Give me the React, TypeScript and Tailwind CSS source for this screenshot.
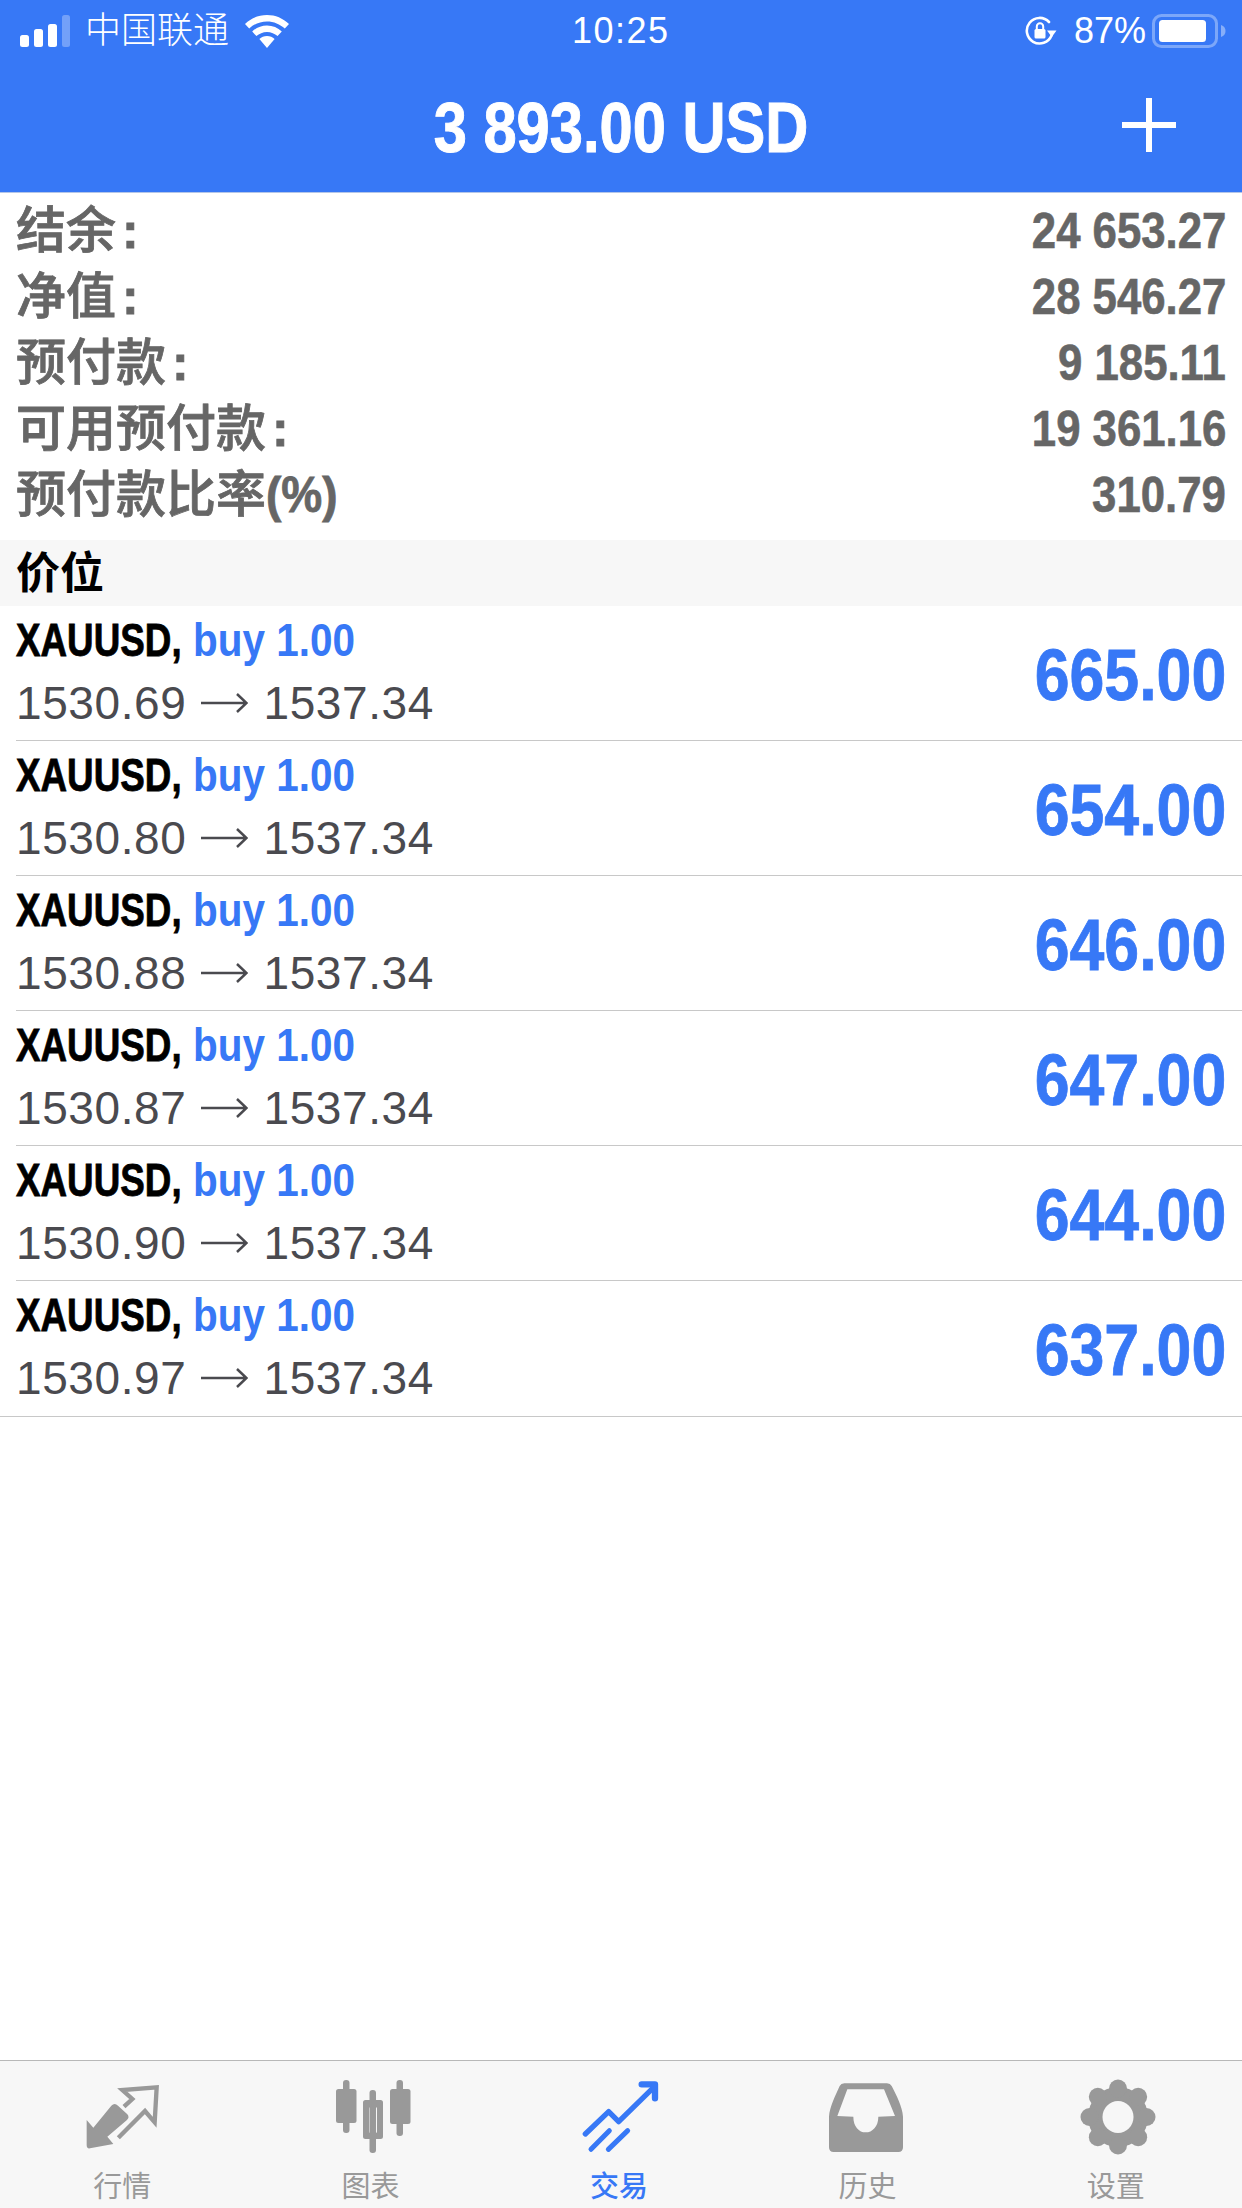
import React from 'react';

const summary = [
  { label: '结余', value: '24 653.27', colon: true },
  { label: '净值', value: '28 546.27', colon: true },
  { label: '预付款', value: '9 185.11', colon: true },
  { label: '可用预付款', value: '19 361.16', colon: true },
  { label: '预付款比率', value: '310.79', colon: false },
];

const positions = [
  { open: '1530.69', profit: '665.00' },
  { open: '1530.80', profit: '654.00' },
  { open: '1530.88', profit: '646.00' },
  { open: '1530.87', profit: '647.00' },
  { open: '1530.90', profit: '644.00' },
  { open: '1530.97', profit: '637.00' },
];

function Signal() {
  return (
    <svg width="50" height="32" viewBox="0 0 50 32" fill="#fff">
      <rect x="0" y="20" width="9" height="12" rx="2.5" />
      <rect x="14" y="14" width="9" height="18" rx="2.5" />
      <rect x="28" y="9" width="9" height="23" rx="2.5" />
      <rect x="42" y="0" width="8" height="32" rx="2.5" opacity="0.3" />
    </svg>
  );
}

function Wifi() {
  return (
    <svg width="44" height="33" viewBox="0 0 44 33" fill="#fff">
      <path d="M22 0C13.5 0 6 3.3 0 9l4.2 4.6C9 9 15.2 6.4 22 6.4S35 9 39.8 13.6L44 9C38 3.3 30.5 0 22 0Z" />
      <path d="M22 10.5c-5.7 0-10.8 2.2-14.8 6l4.2 4.6c2.8-2.6 6.5-4.2 10.6-4.2s7.8 1.6 10.6 4.2l4.2-4.6c-4-3.8-9.1-6-14.8-6Z" />
      <path d="M22 21c-3 0-5.6 1.1-7.6 3L22 33l7.6-9c-2-1.9-4.6-3-7.6-3Z" />
    </svg>
  );
}

function RotationLock() {
  return (
    <svg width="32" height="30" viewBox="0 0 32 30" fill="none">
      <path d="M26.5 19.5A12.8 12.8 0 1 1 24 6" stroke="#fff" strokeWidth="2.6" strokeLinecap="round" />
      <path d="M22 14.5h9.5l-4.7 6.5Z" fill="#fff" />
      <rect x="9.5" y="13" width="11" height="9.5" rx="1.5" fill="#fff" />
      <path d="M11.8 13v-2.5a3.2 3.2 0 0 1 6.4 0V13" stroke="#fff" strokeWidth="2" />
    </svg>
  );
}

function Battery() {
  return (
    <svg width="74" height="34" viewBox="0 0 74 34" fill="none">
      <rect x="1.5" y="1.5" width="63" height="31" rx="8" stroke="#fff" strokeOpacity="0.35" strokeWidth="3" />
      <rect x="7" y="6" width="47" height="22" rx="3.5" fill="#fff" />
      <path d="M69 11c3 1 4.5 3 4.5 6s-1.5 5-4.5 6Z" fill="#fff" fillOpacity="0.4" />
    </svg>
  );
}

function MarketIcon() {
  return (
    <svg width="100" height="95" viewBox="0 -15 300 285">
      <path d="M38 135 58 158 112 92Q122 82 132 92L160 118Q168 128 158 136L100 185 118 207 48 220Q38 222 38 210Z" fill="#999" />
      <path d="M150 95 175 72 145 45 248 37 242 142 213 108 133 188" fill="none" stroke="#999" strokeWidth="13" />
    </svg>
  );
}

function ChartIcon() {
  return (
    <svg width="100" height="95" viewBox="0 0 100 95" fill="#999">
      <rect x="20" y="10" width="6.5" height="53" rx="3" />
      <rect x="13" y="19" width="20.5" height="34" rx="2.5" />
      <rect x="46.5" y="20" width="6.5" height="63" rx="3" />
      <path fillRule="evenodd" d="M42.5 30H57.5Q60 30 60 32.5V66.5Q60 69 57.5 69H42.5Q40 69 40 66.5V32.5Q40 30 42.5 30ZM47.5 37Q46 37 46 38.5V61.5Q46 63 47.5 63H52.5Q54 63 54 61.5V38.5Q54 37 52.5 37Z" />
      <rect x="73.5" y="10" width="6.5" height="56" rx="3" />
      <rect x="67" y="19" width="20.5" height="35" rx="2.5" />
    </svg>
  );
}

function TradeIcon() {
  return (
    <svg width="100" height="95" viewBox="0 0 300 285" fill="none" stroke="#3778f6" strokeLinecap="round" strokeLinejoin="round">
      <path d="M43 192 113 125 143 155 248 52" strokeWidth="16" />
      <path d="M212 43H252V85" strokeWidth="19" />
      <path d="M60 238 115 182M112 238 170 182" strokeWidth="15" />
    </svg>
  );
}

function HistoryIcon() {
  return (
    <svg width="100" height="95" viewBox="0 0 300 285">
      <path
        fillRule="evenodd"
        fill="#999"
        d="M30 140C32 110 50 75 62 48Q66 40 76 40L204 40Q214 40 218 48C232 75 250 110 252 140L252 232Q252 246 238 246L44 246Q30 246 30 232ZM55 138 85 58 195 58 228 138 178 140C178 170 160 187 140 187C120 187 103 170 103 140Z"
      />
    </svg>
  );
}

function SettingsIcon() {
  const teeth = [0, 45, 90, 135, 180, 225, 270, 315];
  return (
    <svg width="100" height="95" viewBox="0 0 100 95">
      <circle cx="50" cy="47" r="30" fill="#999" />
      {teeth.map((deg) => (
        <circle
          key={deg}
          cx={50 + 28.5 * Math.sin((deg * Math.PI) / 180)}
          cy={47 - 28.5 * Math.cos((deg * Math.PI) / 180)}
          r="9"
          fill="#999"
        />
      ))}
      <ellipse cx="50" cy="47" rx="15.5" ry="16" fill="#f7f7f7" />
    </svg>
  );
}

function Arrow() {
  return (
    <svg width="47" height="24" viewBox="0 0 47 24" fill="none" stroke="#4a4a4f" strokeWidth="2.5">
      <path d="M0 12H45M36 3 45.5 12 36 21" />
    </svg>
  );
}

const tabs = [
  { label: '行情', icon: <MarketIcon /> },
  { label: '图表', icon: <ChartIcon /> },
  { label: '交易', icon: <TradeIcon />, active: true },
  { label: '历史', icon: <HistoryIcon /> },
  { label: '设置', icon: <SettingsIcon /> },
];

export default function App() {
  return (
    <div className="w-[1242px] h-[2208px] flex flex-col bg-white overflow-hidden font-['Liberation_Sans','Noto_Sans_CJK_SC',sans-serif]">
      {/* Header */}
      <div className="h-[193px] shrink-0 bg-[#3778f6] border-b border-[#b4c6e8] text-white">
        <div className="h-[62px] flex items-center pl-[20px] pr-[16px]">
          <div className="w-[552px] shrink-0 flex items-center">
            <Signal />
            <span className="ml-[15px] text-[36px] leading-none font-light">中国联通</span>
            <span className="ml-[16px]"><Wifi /></span>
          </div>
          <span className="text-[36px] leading-none tracking-[1.5px]">10:25</span>
          <div className="flex-1 flex items-center justify-end gap-[17px]">
            <RotationLock />
            <div className="flex items-center gap-[6px]">
              <span className="text-[36px] leading-none">87%</span>
              <Battery />
            </div>
          </div>
        </div>
        <div className="relative h-[130px] flex items-center justify-center">
          <span className="inline-block scale-x-[.84] text-[71px] leading-none font-bold whitespace-nowrap [-webkit-text-stroke:1px_white]">3 893.00 USD</span>
          <svg className="absolute left-[1122px] top-[36px]" width="54" height="54" viewBox="0 0 54 54" fill="#fff">
            <rect x="0" y="24" width="54" height="6" />
            <rect x="24" y="0" width="6" height="54" />
          </svg>
        </div>
      </div>

      {/* Account summary */}
      <div className="h-[347px] shrink-0 pt-[5px] px-[16px]">
        {summary.map((row) => (
          <div key={row.label} className="h-[66px] flex items-center justify-between text-[#666666]">
            <span className="text-[50px] leading-none font-medium whitespace-nowrap [-webkit-text-stroke:0.8px_#666666]">
              {row.label}
              {row.colon ? (
                <span className="ml-[6px] font-bold">:</span>
              ) : (
                <span className="inline-block origin-left scale-x-[.92] font-bold">(%)</span>
              )}
            </span>
            <span className="inline-block origin-right scale-x-[.875] text-[50px] leading-none font-bold whitespace-nowrap [-webkit-text-stroke:0.6px_#666666]">{row.value}</span>
          </div>
        ))}
      </div>

      {/* Positions */}
      <div className="h-[66px] shrink-0 flex items-center px-[16px] pt-[2px] bg-[#f7f7f7] text-[44px] leading-none font-bold text-black">价位</div>
      <div className="shrink-0">
        {positions.map((p, i) => {
          const last = i === positions.length - 1;
          return (
            <div key={p.open} className={last ? 'h-[136px] border-b border-[#c8c8c8] pl-[16px]' : 'h-[135px] pl-[16px]'}>
              <div className={last ? 'h-full flex justify-between pr-[16px]' : 'h-full flex justify-between pr-[16px] border-b border-[#c8c8c8]'}>
                <div className="flex flex-col pt-[8px]">
                  <div className="h-[52px] flex items-center text-[46px] leading-none font-bold whitespace-nowrap">
                    <span className="inline-block w-[177px] origin-left scale-x-[.8] text-black [-webkit-text-stroke:0.8px_black]">XAUUSD,</span>
                    <span className="inline-block origin-left scale-x-[.88] text-[#3778f6]">buy 1.00</span>
                  </div>
                  <div className="mt-[14px] h-[46px] flex items-center gap-[15px] text-[46px] leading-none tracking-[0.6px] text-[#4a4a4f] whitespace-nowrap">
                    <span>{p.open}</span>
                    <Arrow />
                    <span>1537.34</span>
                  </div>
                </div>
                <div className="flex items-center pt-[3px]">
                  <span className="inline-block origin-right scale-x-[.87] text-[72px] leading-none font-bold text-[#3778f6] [-webkit-text-stroke:0.8px_#3778f6]">{p.profit}</span>
                </div>
              </div>
            </div>
          );
        })}
      </div>

      <div className="flex-1" />

      {/* Tab bar */}
      <div className="h-[148px] shrink-0 grid grid-cols-5 bg-[#f7f7f7] border-t border-[#b8b8b8]">
        {tabs.map((tab) => (
          <div key={tab.label} className="flex flex-col items-center pt-[9px]">
            {tab.icon}
            <span className={tab.active ? 'text-[29px] leading-none font-medium text-[#3778f6] mt-[8px] -translate-x-[2px]' : 'text-[29px] leading-none text-[#999999] mt-[8px] -translate-x-[2px]'}>{tab.label}</span>
          </div>
        ))}
      </div>
    </div>
  );
}
